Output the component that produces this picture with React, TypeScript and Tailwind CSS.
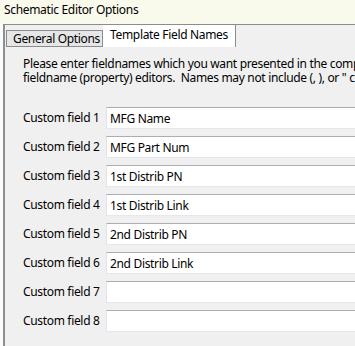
import React from "react";

const fields = [
  "MFG Name",
  "MFG Part Num",
  "1st Distrib PN",
  "1st Distrib Link",
  "2nd Distrib PN",
  "2nd Distrib Link",
  "",
  "",
];

export default function App() {
  return (
    <div
      className="w-[355px] h-[346px] overflow-hidden bg-[#fbfbfb] text-[12px] tracking-[-0.33px] text-black flex flex-col"
      style={{ fontFamily: '"Noto Sans", "Segoe UI", sans-serif' }}
    >
      {/* Title bar */}
      <div className="h-[24px] shrink-0 bg-[#f9f9ec] pl-[4px] pt-[2px] leading-[16px] whitespace-nowrap">
        Schematic Editor Options
      </div>

      {/* Tab control frame */}
      <div className="ml-[3px] flex-1 flex flex-col border-t border-l-2 border-t-[#8c8c8c] border-l-[#8f8f8f] bg-[#f0f0f0] min-h-0">
        {/* Tab strip */}
        <div className="h-[22px] shrink-0 flex items-end pl-[1px]">
          <div className="h-[17px] w-[97px] bg-[#e6e6e6] border border-[#8c8c8c] pl-[6px] leading-[15px] whitespace-nowrap overflow-hidden">
            General Options
          </div>
          <div className="h-[22px] w-[133px] bg-white border-r border-[#8c8c8c] pl-[7px] pt-[2px] leading-[16px] whitespace-nowrap overflow-hidden">
            Template Field Names
          </div>
        </div>

        {/* Content */}
        <div className="flex-1 pl-[18px] pt-[10px] overflow-hidden">
          <div className="leading-[14px] whitespace-nowrap">
            <div>Please enter fieldnames which you want presented in the component</div>
            <div>fieldname (property) editors.&nbsp; Names may not include (, ), or " characters.</div>
          </div>
          <div className="mt-[22px] flex flex-col gap-[7px]">
            {fields.map((v, i) => (
              <div key={i} className="flex items-center h-[22px]">
                <div className="w-[83px] shrink-0 whitespace-nowrap">Custom field {i + 1}</div>
                <input
                  readOnly
                  value={v}
                  className="shrink-0 w-[280px] h-[22px] bg-white border border-t-[#abadb3] border-x-[#e2e3ea] border-b-[#e3e9ef] pl-[3px] text-[12px] tracking-[-0.33px] text-black outline-none"
                  style={{ fontFamily: '"Noto Sans", "Segoe UI", sans-serif' }}
                />
              </div>
            ))}
          </div>
        </div>
      </div>
    </div>
  );
}
